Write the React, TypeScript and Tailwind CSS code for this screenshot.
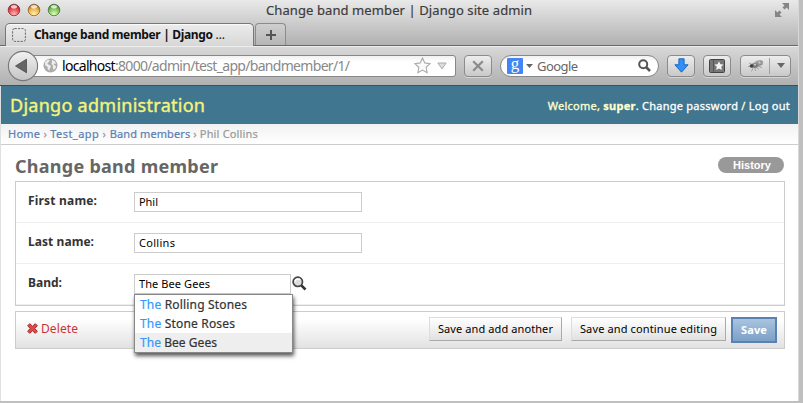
import { useLayoutEffect, useRef, useState, type ReactNode } from "react";

/* Spreads its letters so that the line is exactly `width` pixels long. */
function Fit({ width, className = "", children }: { width: number; className?: string; children: ReactNode }) {
  const ref = useRef<HTMLSpanElement>(null);
  const [spacing, setSpacing] = useState(0);
  useLayoutEffect(() => {
    const el = ref.current;
    if (!el) return;
    el.style.letterSpacing = "0px";
    const natural = el.getBoundingClientRect().width;
    const gaps = Math.max(1, (el.textContent || "").length - 1);
    const next = (width - natural) / gaps;
    el.style.letterSpacing = `${next}px`;
    setSpacing(next);
  }, [width]);
  return (
    <span ref={ref} className={`inline-block shrink-0 whitespace-pre ${className}`} style={{ letterSpacing: `${spacing}px` }}>
      {children}
    </span>
  );
}

function TrafficLight({ id, light, mid, dark }: { id: string; light: string; mid: string; dark: string }) {
  return (
    <svg width="14" height="14" viewBox="0 0 14 14">
      <defs>
        <radialGradient id={id} cx="0.5" cy="0.85" r="0.8">
          <stop offset="0" stopColor={light} />
          <stop offset="0.6" stopColor={mid} />
          <stop offset="1" stopColor={dark} />
        </radialGradient>
      </defs>
      <circle cx="7" cy="7.6" r="6.1" fill="#fff" opacity="0.5" />
      <circle cx="7" cy="7" r="5.8" fill={`url(#${id})`} stroke={dark} strokeWidth="0.9" />
      <ellipse cx="7" cy="3.7" rx="3" ry="1.8" fill="#fff" opacity="0.75" />
    </svg>
  );
}

const toolButton =
  "flex h-[22px] shrink-0 items-center justify-center rounded-[4px] border border-[#8b8b8b] bg-linear-to-b from-[#ededed] to-[#c9c9c9] shadow-[0_1px_0_rgba(255,255,255,0.4)]";

function TitleBar() {
  return (
    <div className="flex h-[22px] items-start pt-[3px] pl-[7px]">
      <div className="flex gap-[6px]">
        <TrafficLight id="red" light="#ffb9bb" mid="#e8474c" dark="#8f3034" />
        <TrafficLight id="yellow" light="#fff3a8" mid="#f0b04c" dark="#94682c" />
        <TrafficLight id="green" light="#dcffb4" mid="#7fc35c" dark="#4c7a3a" />
      </div>
      <div className="ml-[205px] text-[13px] leading-[14px] text-[#3c3c3c] [-webkit-text-stroke:0.2px]">
        <Fit width={266}>Change band member | Django site admin</Fit>
      </div>
      <svg className="ml-[243px]" width="14" height="14" viewBox="0 0 14 14" fill="#858585">
        <path d="M7 0h7v7l-2.4-2.4-2 2L7.5 4.5l2-2zM0 14V7l2.4 2.4 2-2 2.1 2.1-2 2L7 14z" />
      </svg>
    </div>
  );
}

function TabStrip() {
  return (
    <div className="flex h-[24px] items-end border-b border-[#696969] pl-[5px]">
      <div className="relative z-10 -mb-px mt-px flex h-[23px] w-[249px] shrink-0 items-center rounded-t-[5px] border border-b-0 border-[#777] bg-linear-to-b from-[#ececec] to-[#d7d7d7] pl-[6px] shadow-[inset_0_1px_0_#fafafa]">
        <svg width="14" height="14" viewBox="0 0 14 14">
          <rect x="0.6" y="0.6" width="12.8" height="12.8" rx="2" fill="none" stroke="#666" strokeWidth="1" strokeDasharray="2.2 1.2" />
        </svg>
        <div className="ml-[8px] text-[12px] leading-[16px] font-bold text-[#111]">
          <Fit width={191}>
            Change band member | Django <span className="font-normal">…</span>
          </Fit>
        </div>
      </div>
      <div className="ml-px flex h-[22px] w-[31px] shrink-0 items-center justify-center rounded-t-[4px] border border-b-0 border-[#8c8c8c] bg-linear-to-b from-[#cfcfcf] to-[#b5b5b5]">
        <svg width="10" height="10" viewBox="0 0 10 10" fill="#555">
          <path d="M4 0h2v4h4v2h-4v4h-2v-4h-4v-2h4z" />
        </svg>
      </div>
    </div>
  );
}

function Toolbar() {
  return (
    <div className="flex h-[40px] items-center border-b border-[#4b4b4b] bg-linear-to-b from-[#d9d9d9] to-[#b0b0b0] pl-[7px] shadow-[inset_0_1px_0_#ececec]">
      <svg className="relative z-10 shrink-0" width="32" height="32" viewBox="0 0 32 32">
        <defs>
          <linearGradient id="back" x1="0" y1="0" x2="0" y2="1">
            <stop offset="0" stopColor="#f2f2f2" />
            <stop offset="1" stopColor="#c4c4c4" />
          </linearGradient>
        </defs>
        <circle cx="16" cy="16" r="14.6" fill="url(#back)" stroke="#777" strokeWidth="1.1" />
        <path d="M8.5 16L19.5 9.2v13.6z" fill="#666" stroke="#4c4c4c" strokeWidth="0.8" />
      </svg>
      <div className="-ml-[6px] flex h-[22px] w-[423px] shrink-0 items-center rounded-r-[3px] border border-[#888] bg-linear-to-b from-[#f1f1f1] to-white to-30% pl-[9px]">
        <svg width="15" height="15" viewBox="0 0 15 15">
          <circle cx="7.5" cy="7.5" r="7" fill="#ababab" />
          <path d="M2 4l3-2.4 1.6.6L6 4 4.4 4.9 5 6.6 7 7l1 1.8-1.2 1.6-.4 2.4-1.6-1.6L4.4 8.6 2.2 7.5zM9 1.8l2.7 1.4 1.6 2.6-1.8-.4-.8 1.4 2.3 1.1-.4 2.4-1.9 1.6-1-2.6.4-1.8-1.6-1.2z" fill="#eee" />
        </svg>
        <div className="ml-[4px] text-[14px] leading-[18px] text-[#888]">
          <Fit width={288}>
            <span className="text-black">localhost</span>:8000/admin/test_app/bandmember/1/
          </Fit>
        </div>
        <svg className="ml-[65px] shrink-0" width="17" height="17" viewBox="0 0 17 17">
          <path d="M8.5 1l2.3 4.9 5.2.7-3.8 3.7.9 5.4-4.6-2.6-4.6 2.6.9-5.4L1 6.6l5.2-.7z" fill="#fafafa" stroke="#aaa" strokeWidth="1.1" />
        </svg>
        <svg className="ml-[6px] shrink-0" width="10" height="8" viewBox="0 0 10 8">
          <path d="M0.8 1h8.4L5 6.8z" fill="#ddd" stroke="#aaa" />
        </svg>
      </div>
      <div className={`${toolButton} ml-[8px] w-[28px]`}>
        <svg width="12" height="12" viewBox="0 0 12 12">
          <path d="M1.2 1.2l9.6 9.6M10.8 1.2l-9.6 9.6" stroke="#8b8b8b" strokeWidth="2.3" />
        </svg>
      </div>
      <div className="ml-[8px] flex h-[22px] w-[159px] shrink-0 items-center rounded-full border border-[#888] bg-linear-to-b from-[#f1f1f1] to-white to-30% pl-[6px]">
        <div className="flex size-[16px] shrink-0 items-center justify-center rounded-[1px] bg-[#4285f4] pb-[4px] font-['Liberation_Serif',serif] text-[17px] leading-[12px] text-white">
          g
        </div>
        <svg className="ml-[3px] shrink-0" width="7" height="4" viewBox="0 0 7 4">
          <path d="M0 0h7L3.5 4z" fill="#666" />
        </svg>
        <div className="ml-[4px] text-[13px] leading-[16px] text-[#666]">
          <Fit width={41}>Google</Fit>
        </div>
        <svg className="ml-[61px] shrink-0" width="13" height="13" viewBox="0 0 13 13">
          <circle cx="5.2" cy="5.2" r="4" fill="none" stroke="#555" strokeWidth="2" />
          <path d="M8 8l4 4" stroke="#555" strokeWidth="2.5" />
        </svg>
      </div>
      <div className={`${toolButton} ml-[8px] w-[28px]`}>
        <svg width="15" height="15" viewBox="0 0 15 15">
          <path d="M4.9 0.8h5.2v6h4L7.5 14.2.9 6.8h4z" fill="#3190f8" stroke="#1768c6" />
        </svg>
      </div>
      <div className={`${toolButton} ml-[8px] w-[28px]`}>
        <svg width="16" height="14" viewBox="0 0 16 14">
          <rect x="0.5" y="0.5" width="15" height="13" rx="1" fill="#777" stroke="#444" />
          <path d="M4.5 1v12" stroke="#555" />
          <path d="M10 2.3l1.4 2.9 3.2.4-2.4 2.2.7 3.3-2.9-1.7L7.1 11l.7-3.2-2.4-2.2 3.2-.4z" fill="#f4f4f4" />
        </svg>
      </div>
      <div className={`${toolButton} ml-[9px] w-[51px]`}>
        <svg width="18" height="14" viewBox="0 0 18 14">
          <path d="M2 4l3 1.5M1 7.5L5 7M4.5 12.5l1.7-4M8.5 12l-.5-3M12 10.5L9 8M15 8.5L11 7.3" stroke="#999" strokeWidth="0.9" />
          <ellipse cx="11.5" cy="4.3" rx="4.8" ry="3" transform="rotate(-18 11.5 4.3)" fill="#a3a3a3" />
          <path d="M8 5l7.5-2.5M9 6.5L15.5 5" stroke="#858585" strokeWidth="0.8" />
          <ellipse cx="7.6" cy="6.6" rx="3.4" ry="2.5" fill="#7b7b7b" />
          <circle cx="4.5" cy="7" r="1.8" fill="#444" />
          <circle cx="8" cy="5.6" r="1" fill="#d5d5d5" />
          <circle cx="12.5" cy="3.4" r="1" fill="#ccc" />
        </svg>
        <div className="ml-[4px] h-[16px] w-px bg-[#a0a0a0]" />
        <svg className="ml-[7px]" width="8" height="5" viewBox="0 0 8 5">
          <path d="M0 0h8L4 5z" fill="#666" />
        </svg>
      </div>
    </div>
  );
}

function Row({ label, labelWidth, children }: { label: string; labelWidth: number; children: ReactNode }) {
  return (
    <div className="flex h-[41px] items-start border-b border-[#eee] pt-[10px] pl-[12px]">
      <div className="w-[106px] shrink-0 text-[12px] leading-[18px] font-bold text-[#333]">
        <Fit width={labelWidth}>{label}</Fit>
      </div>
      {children}
    </div>
  );
}

function Field({ value, valueWidth, className }: { value: string; valueWidth: number; className: string }) {
  return (
    <div className={`flex h-[20px] shrink-0 items-center border border-[#ccc] bg-white pl-[4px] text-[11px] leading-[14px] text-black ${className}`}>
      <Fit width={valueWidth}>{value}</Fit>
    </div>
  );
}

const suggestions = [
  { name: "Rolling Stones", width: 107, active: false },
  { name: "Stone Roses", width: 95, active: false },
  { name: "Bee Gees", width: 77, active: true },
];

function Suggestions() {
  return (
    <div className="absolute top-full left-0 z-20 w-[159px] border border-[#888] bg-white shadow-[1px_3px_4px_rgba(0,0,0,0.65)]">
      {suggestions.map((s) => (
        <div key={s.name} className={`h-[19px] pl-[5px] text-[12px] leading-[19px] text-[#333] [-webkit-text-stroke:0.2px] ${s.active ? "bg-[#eee]" : ""}`}>
          <Fit width={s.width}>
            <span className="text-[#3399ff]">The</span> {s.name}
          </Fit>
        </div>
      ))}
    </div>
  );
}

export default function App() {
  return (
    <div className="h-[403px] w-[803px] overflow-hidden bg-[#bfbfbf] font-['Noto_Sans','Open_Sans',sans-serif]">
      <div className="h-[401px] w-[799px] overflow-hidden border-r border-[#d8d8d8] bg-white">
        <div className="bg-linear-to-b from-[#e9e9e9] to-[#b0b0b0]">
          <TitleBar />
          <TabStrip />
        </div>
        <Toolbar />
        <div className="h-[315px] border-l border-[#e0e0e0]">
          <div className="flex h-[38px] items-center justify-between bg-[#417690] pr-[8px] pl-[9px]">
            <div className="text-[18px] leading-[24px] text-[#f4f379] [-webkit-text-stroke:0.4px]">
              <Fit width={195}>Django administration</Fit>
            </div>
            <div className="pt-px text-[11px] leading-[14px] text-[#ffffcc] [-webkit-text-stroke:0.3px]">
              <Fit width={242}>
                Welcome, <b>super</b>. <span className="text-white">Change password</span> / <span className="text-white">Log out</span>
              </Fit>
            </div>
          </div>
          <div className="flex h-[21px] items-center border-b border-[#ccc] bg-linear-to-b from-[#f1f1f1] to-white pl-[7px] text-[11px] leading-[14px] whitespace-pre text-[#999] [-webkit-text-stroke:0.2px]">
            <Fit width={42} className="text-[#5b80b2]">
              Home <span className="text-[#999]">› </span>
            </Fit>
            <Fit width={59} className="text-[#5b80b2]">
              Test_app <span className="text-[#999]">› </span>
            </Fit>
            <Fit width={90} className="text-[#5b80b2]">
              Band members <span className="text-[#999]">› </span>
            </Fit>
            <Fit width={58}>Phil Collins</Fit>
          </div>
          <div className="pr-[13px] pl-[14px]">
            <div className="flex h-[36px] items-start justify-between">
              <h1 className="pt-[9px] text-[18px] leading-[24px] font-bold text-[#666]">
                <Fit width={203}>Change band member</Fit>
              </h1>
              <div className="mt-[12px] mr-px flex h-[16px] w-[66px] items-center justify-center rounded-full bg-[#999] pb-px pl-[2px] font-['Liberation_Sans',Arial,sans-serif] text-[11px] leading-[14px] font-bold text-white">
                <Fit width={38}>History</Fit>
              </div>
            </div>
            <div className="h-[125px] border border-[#ccc]">
              <Row label="First name:" labelWidth={69}>
                <Field value="Phil" valueWidth={19} className="w-[228px]" />
              </Row>
              <Row label="Last name:" labelWidth={66}>
                <Field value="Collins" valueWidth={36} className="w-[228px]" />
              </Row>
              <Row label="Band:" labelWidth={34}>
                <div className="relative">
                  <Field value="The Bee Gees" valueWidth={71} className="w-[157px]" />
                  <Suggestions />
                </div>
                <svg className="mt-[2px] ml-px" width="15" height="15" viewBox="0 0 15 15">
                  <circle cx="5.8" cy="5.8" r="4.7" fill="#ddd" stroke="#444" strokeWidth="1.7" />
                  <path d="M3 5.5a3 3 0 0 1 5-1.8" stroke="#fff" strokeWidth="1.5" fill="none" />
                  <path d="M9.3 9.3l4.2 4.2" stroke="#333" strokeWidth="2.6" />
                </svg>
              </Row>
            </div>
            <div className="mt-[5px] flex h-[38px] items-start border border-[#ccc] bg-linear-to-b from-white from-20% to-[#e2e2e2] pt-[5px] pr-[7px] pl-[11px]">
              <svg className="mt-[6px]" width="11" height="11" viewBox="0 0 11 11">
                <path d="M2.7.7l2.8 2.5L8.3.7l2 2-2.5 2.8 2.5 2.8-2 2-2.8-2.5-2.8 2.5-2-2 2.5-2.8L.7 2.7z" fill="#e34848" stroke="#a52828" strokeWidth="1" />
              </svg>
              <div className="mt-[4px] ml-[3px] text-[12px] leading-[16px] text-[#cc3434]">
                <Fit width={37}>Delete</Fit>
              </div>
              <div className="ml-auto flex text-[11px] leading-[14px] text-black">
                <div className="flex h-[24px] w-[133px] items-center justify-center border border-t-[#ddd] border-r-[#aaa] border-b-[#aaa] border-l-[#ddd] bg-linear-to-b from-white to-[#e1e1e1]">
                  <Fit width={115}>Save and add another</Fit>
                </div>
                <div className="ml-[9px] flex h-[24px] w-[155px] items-center justify-center border border-t-[#ddd] border-r-[#aaa] border-b-[#aaa] border-l-[#ddd] bg-linear-to-b from-white to-[#e1e1e1]">
                  <Fit width={137}>Save and continue editing</Fit>
                </div>
                <div className="ml-[5px] flex h-[26px] w-[46px] items-center justify-center border-2 border-[#5b80b2] bg-linear-to-b from-[#a9c4df] to-[#7ca0c7] font-bold text-white">
                  <Fit width={26}>Save</Fit>
                </div>
              </div>
            </div>
          </div>
        </div>
      </div>
    </div>
  );
}
